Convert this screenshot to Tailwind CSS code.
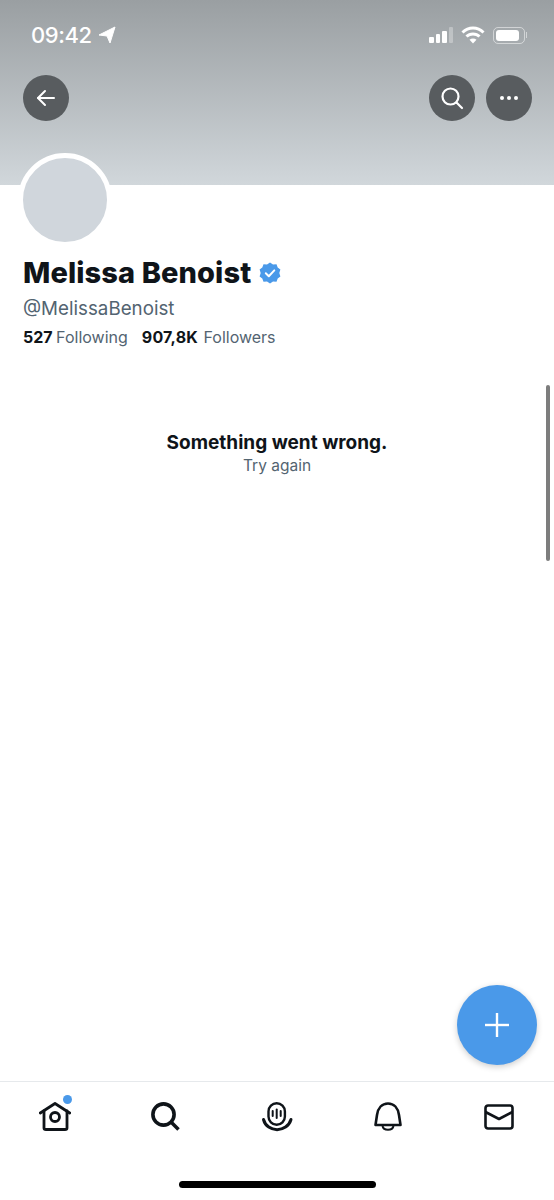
<!DOCTYPE html>
<html lang="en">
<head>
    <meta charset="UTF-8">
    <meta name="viewport" content="width=device-width, initial-scale=1.0">
    <title>Melissa Benoist</title>
    <script src="https://cdn.jsdelivr.net/npm/@tailwindcss/browser@4"></script>
</head>
<body class="bg-white font-['Inter','Liberation_Sans',sans-serif]">
    <div class="relative w-[554px] h-[1200px] overflow-hidden flex flex-col bg-white">
        <!-- banner -->
        <header class="h-[185px] shrink-0 bg-gradient-to-b from-[#9a9fa2] to-[#d1d7db] pt-[22px]">
            <div class="flex items-center justify-between pl-[31px] pr-[27px] h-[26px]">
                <div class="flex items-center gap-[6px] text-white">
                    <span class="text-[22px] leading-[26px] font-medium tracking-[-0.4px]">09:42</span>
                    <svg width="18" height="18" viewBox="0 0 18 18" fill="#fff" stroke="#fff" stroke-width="1" stroke-linejoin="round"><path d="M17 1 L1 9 L9 10 L12 17 Z"/></svg>
                </div>
                <div class="flex items-center gap-[8px]">
                    <div class="flex items-end gap-[2px] h-[16px]">
                        <span class="w-[4.5px] h-[6px] rounded-[1px] bg-white"></span>
                        <span class="w-[4.5px] h-[9px] rounded-[1px] bg-white"></span>
                        <span class="w-[4.5px] h-[12px] rounded-[1px] bg-white"></span>
                        <span class="w-[4.5px] h-[16px] rounded-[1px] bg-white/30"></span>
                    </div>
                    <svg width="24" height="18" viewBox="0 0 24 18" fill="none" stroke="#fff" stroke-width="3"><path d="M1.5 6.5 C7.5 0.5 16.5 0.5 22.5 6.5"/><path d="M5.5 10.5 C9 7 15 7 18.5 10.5"/><path d="M12 17.5 L8.5 13.8 C10.5 12.2 13.5 12.2 15.5 13.8 Z" fill="#fff" stroke="none"/></svg>
                    <div class="flex items-center gap-[1px]">
                        <div class="w-[32px] h-[17px] rounded-[5px] border border-white/50 p-[2px]">
                            <div class="w-[23px] h-full rounded-[3px] bg-white"></div>
                        </div>
                        <span class="w-[1px] h-[6px] bg-white/50"></span>
                    </div>
                </div>
            </div>
            <div class="flex items-center justify-between pl-[23px] pr-[22px] mt-[27px]">
                <button class="w-[46px] h-[46px] rounded-full bg-[#585c5f] flex items-center justify-center">
                    <svg width="20" height="18" viewBox="0 0 20 18" fill="none" stroke="#fff" stroke-width="2" stroke-linecap="round" stroke-linejoin="round"><path d="M18 9 H2"/><path d="M9 2 L2 9 L9 16"/></svg>
                </button>
                <div class="flex gap-[11px]">
                    <button class="w-[46px] h-[46px] rounded-full bg-[#585c5f] flex items-center justify-center">
                        <svg width="24" height="24" viewBox="0 0 24 24" fill="none" stroke="#fff" stroke-width="2.2" stroke-linecap="round"><circle cx="10.5" cy="10.5" r="8"/><path d="M16.5 16.5 L22 22"/></svg>
                    </button>
                    <button class="w-[46px] h-[46px] rounded-full bg-[#585c5f] flex items-center justify-center gap-[3px]">
                        <span class="w-[4px] h-[4px] rounded-full bg-white"></span>
                        <span class="w-[4px] h-[4px] rounded-full bg-white"></span>
                        <span class="w-[4px] h-[4px] rounded-full bg-white"></span>
                    </button>
                </div>
            </div>
        </header>

        <!-- profile -->
        <main class="flex-1 px-[23px]">
            <div class="w-[94px] h-[94px] -mt-[32px] -ml-[5px] rounded-full bg-[#d0d6dc] border-[5px] border-white"></div>
            <div class="flex items-center gap-[8px] mt-[8px] h-[36px]">
                <h1 class="text-[29px] leading-[36px] font-extrabold text-[#0f1419] tracking-[0.1px]">Melissa Benoist</h1>
                <svg width="22" height="22" viewBox="0 0 22 22"><path fill="#4a99e9" d="M11 0.5 L14 2.4 L17.5 2.2 L18.7 5.4 L21.4 7.5 L20.3 11 L21.4 14.5 L18.7 16.6 L17.5 19.8 L14 19.6 L11 21.5 L8 19.6 L4.5 19.8 L3.3 16.6 L0.6 14.5 L1.7 11 L0.6 7.5 L3.3 5.4 L4.5 2.2 L8 2.4 Z"/><path d="M6.8 11.3 L9.8 14.2 L15.3 8.4" fill="none" stroke="#fff" stroke-width="2" stroke-linecap="round" stroke-linejoin="round"/></svg>
            </div>
            <p class="text-[18.75px] leading-[24px] text-[#536471] mt-[6px]">@MelissaBenoist</p>
            <div class="flex gap-[14px] mt-[5px] text-[16px] leading-[22px] text-[#536471]">
                <span class="[word-spacing:-1px]"><b class="font-bold text-[#0f1419]">527</b> Following</span>
                <span class="[word-spacing:1px]"><b class="font-bold text-[#0f1419] tracking-[0.2px]">907,8K</b> Followers</span>
            </div>
            <div class="mt-[83px] text-center">
                <p class="text-[19px] leading-[24px] font-bold text-[#0f1419]">Something went wrong.</p>
                <p class="text-[15.5px] leading-[22px] text-[#536471]">Try again</p>
            </div>
        </main>

        <!-- scroll thumb -->
        <div class="absolute left-[546px] top-[385px] w-[4px] h-[176px] rounded-full bg-[#7d7d7d]"></div>

        <!-- compose -->
        <button class="absolute left-[457px] top-[985px] w-[80px] h-[80px] rounded-full bg-[#4a99e9] shadow-[0_2px_6px_rgba(0,0,0,0.2)] flex items-center justify-center">
            <svg width="24" height="24" viewBox="0 0 24 24" fill="none" stroke="#fff" stroke-width="2.4"><path d="M12 0 V24"/><path d="M0 12 H24"/></svg>
        </button>

        <!-- tab bar -->
        <nav class="h-[119px] shrink-0 border-t border-[#e6e9ec]">
            <div class="grid grid-cols-5 h-[50px] pt-[20px]">
                <div class="relative flex justify-center">
                    <svg width="32" height="30" viewBox="0 0 32 30" fill="none" stroke="#0f1419" stroke-width="2.8" stroke-linejoin="round" stroke-linecap="round"><path d="M1.3 11 L16 1.5 L30.7 11"/><path d="M5 9 V26 Q5 27.5 7 27.5 H26 Q28 27.5 28 26 V9"/><circle cx="16" cy="15" r="4.5"/></svg>
                    <span class="absolute left-[62.5px] -top-[7px] w-[9px] h-[9px] rounded-full bg-[#4a99e9]"></span>
                </div>
                <div class="flex justify-center">
                    <svg width="30" height="30" viewBox="0 0 30 30" fill="none" stroke="#0f1419" stroke-width="3.6"><circle cx="12.5" cy="12.5" r="10.6"/><path d="M20 20 L27.5 27.5"/></svg>
                </div>
                <div class="flex justify-center">
                    <svg width="32" height="30" viewBox="0 0 32 30" fill="none" stroke="#0f1419" stroke-linecap="round"><rect x="7.5" y="1.2" width="16.4" height="21.6" rx="8.2" stroke-width="2.4"/><path d="M11.7 9 V14" stroke-width="2"/><path d="M15.7 7.5 V16" stroke-width="2"/><path d="M19.7 9 V14" stroke-width="2"/><path d="M2.5 17.5 C6 31 26 31 30 17.5" stroke-width="3"/></svg>
                </div>
                <div class="flex justify-center">
                    <svg width="28" height="30" viewBox="0 0 28 30" fill="none" stroke="#0f1419" stroke-width="2.6" stroke-linejoin="round"><path d="M1.5 23 H26.5 L25 13 C24 6 20 1.5 14 1.5 C8 1.5 4 6 3 13 Z"/><path d="M8.5 24 C9.5 29 18.5 29 19.5 24" stroke-width="2"/></svg>
                </div>
                <div class="flex justify-center pt-[2px]">
                    <svg width="30" height="26" viewBox="0 0 30 26" fill="none" stroke="#0f1419" stroke-width="2.6" stroke-linejoin="round"><rect x="1.5" y="1.5" width="27" height="23" rx="2.5"/><path d="M1.5 8 L15 15 L28.5 8"/></svg>
                </div>
            </div>
        </nav>

        <!-- home indicator -->
        <div class="absolute left-[179px] top-[1181px] w-[197px] h-[7px] rounded-full bg-black"></div>
    </div>
</body>
</html>
